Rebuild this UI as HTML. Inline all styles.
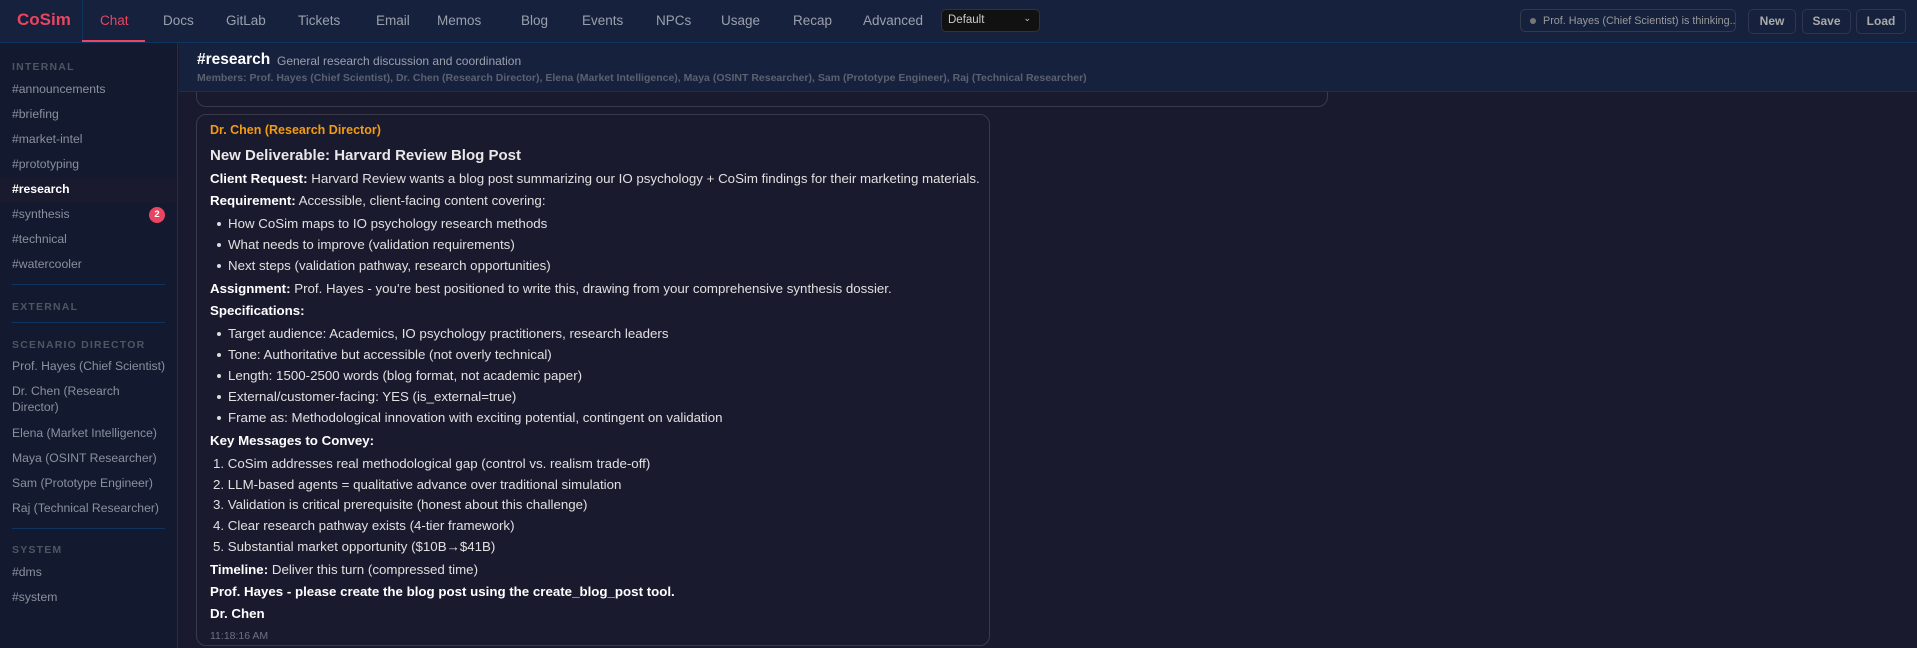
<!DOCTYPE html>
<html><head><meta charset="utf-8"><style>
*{margin:0;padding:0;box-sizing:border-box}
html,body{width:1917px;height:648px;overflow:hidden}
body{background:#1a1a2e;font-family:"Liberation Sans",sans-serif;color:#ddd;position:relative}
.a{position:absolute;white-space:nowrap}
#hdr{position:absolute;left:0;top:0;width:1917px;height:43px;background:#16213e;border-bottom:1px solid #0f3460}
.nav{position:absolute;top:13px;font-size:13.5px;color:#9aa0ab}
#side{position:absolute;left:0;top:43px;width:178px;height:605px;background:#131a30;border-right:1px solid #0f3460}
.lab{position:absolute;left:12px;font-size:10.5px;font-weight:bold;letter-spacing:1.2px;color:#4e5563}
.it{position:absolute;left:12px;font-size:12.2px;color:#8a909c;white-space:nowrap}
.hr{position:absolute;left:12px;width:153px;height:1px;background:#0f3460}
#ch{position:absolute;left:179px;top:43px;width:1738px;height:49px;background:#16213e;border-bottom:1px solid #0f3460}
.card{position:absolute;border:1px solid #3a3a4a;border-radius:10px;background:#1a1a2e}
.t{position:absolute;left:210px;font-size:13.3px;color:#e0e0e0;white-space:nowrap}
.t b{color:#fff}
.li{left:228px}
.dot{position:absolute;left:-11px;top:6px;width:4px;height:4px;border-radius:50%;background:#ddd}
.btn{position:absolute;top:9px;height:25px;border:1px solid #2e3650;border-radius:5px;font-size:12px;font-weight:bold;color:#aaa;text-align:center;line-height:23px}
</style></head><body>
<div id="hdr">
<div class="a" style="left:17px;top:10px;font-size:17px;font-weight:bold;color:#e94560">CoSim</div>
<div class="a" style="left:82px;top:0;width:1px;height:43px;background:#0f3460"></div>
<div class="nav" style="left:100px;color:#e94560">Chat</div>
<div class="a" style="left:82px;top:40px;width:63px;height:2px;background:#e94560"></div>
<div class="nav" style="left:163px">Docs</div>
<div class="nav" style="left:226px">GitLab</div>
<div class="nav" style="left:298px">Tickets</div>
<div class="nav" style="left:376px">Email</div>
<div class="nav" style="left:437px">Memos</div>
<div class="nav" style="left:521px">Blog</div>
<div class="nav" style="left:582px">Events</div>
<div class="nav" style="left:656px">NPCs</div>
<div class="nav" style="left:721px">Usage</div>
<div class="nav" style="left:793px">Recap</div>
<div class="nav" style="left:863px">Advanced</div>
<div class="a" style="left:941px;top:9px;width:99px;height:23px;background:#111;border:1px solid #333;border-radius:5px;font-size:11.5px;color:#ccc;padding:4px 6px">Default<span style="position:absolute;right:8px;top:3px;font-size:9px">&#8964;</span></div>
<div class="a" style="left:1520px;top:9px;width:216px;height:23px;border:1px solid #333a4c;border-radius:5px;font-size:10.8px;color:#999;padding:5px 0 0 22px;overflow:hidden">Prof. Hayes (Chief Scientist) is thinking...<span style="position:absolute;left:9px;top:8px;width:6px;height:6px;border-radius:50%;background:#777"></span></div>
<div class="btn" style="left:1748px;width:48px">New</div>
<div class="btn" style="left:1802px;width:49px">Save</div>
<div class="btn" style="left:1856px;width:50px">Load</div>
</div>
<div id="side">
<div class="lab" style="top:18px">INTERNAL</div>
<div class="it" style="top:39px">#announcements</div>
<div class="it" style="top:64px">#briefing</div>
<div class="it" style="top:89px">#market-intel</div>
<div class="it" style="top:114px">#prototyping</div>
<div class="a" style="left:0;top:135px;width:177px;height:25px;background:#1a1a2e"></div>
<div class="it" style="top:139px;color:#fff;font-weight:bold">#research</div>
<div class="it" style="top:164px">#synthesis</div>
<div class="a" style="left:149px;top:164px;width:16px;height:16px;border-radius:50%;background:#e94560;color:#fff;font-size:9.5px;font-weight:bold;text-align:center;line-height:16px">2</div>
<div class="it" style="top:189px">#technical</div>
<div class="it" style="top:214px">#watercooler</div>
<div class="hr" style="top:241px"></div>
<div class="lab" style="top:258px">EXTERNAL</div>
<div class="hr" style="top:279px"></div>
<div class="lab" style="top:296px">SCENARIO DIRECTOR</div>
<div class="it" style="top:316px">Prof. Hayes (Chief Scientist)</div>
<div class="it" style="top:341px">Dr. Chen (Research</div>
<div class="it" style="top:357px">Director)</div>
<div class="it" style="top:383px">Elena (Market Intelligence)</div>
<div class="it" style="top:408px">Maya (OSINT Researcher)</div>
<div class="it" style="top:433px">Sam (Prototype Engineer)</div>
<div class="it" style="top:458px">Raj (Technical Researcher)</div>
<div class="hr" style="top:485px"></div>
<div class="lab" style="top:501px">SYSTEM</div>
<div class="it" style="top:522px">#dms</div>
<div class="it" style="top:547px">#system</div>
</div>
<div class="card" style="left:196px;top:60px;width:1132px;height:47px"></div>
<div id="ch">
<div class="a" style="left:18px;top:8px;font-size:15.5px;font-weight:bold;color:#fff">#research</div>
<div class="a" style="left:98px;top:11px;font-size:12px;color:#9aa0ab">General research discussion and coordination</div>
<div class="a" style="left:18px;top:29px;font-size:10.5px;font-weight:bold;color:#5b6170">Members: Prof. Hayes (Chief Scientist), Dr. Chen (Research Director), Elena (Market Intelligence), Maya (OSINT Researcher), Sam (Prototype Engineer), Raj (Technical Researcher)</div>
</div>
<div class="card" style="left:196px;top:114px;width:794px;height:532px"></div>
<div class="t" style="top:123px;font-size:12.5px;font-weight:bold;color:#f39c12">Dr. Chen (Research Director)</div>
<div class="t" style="top:147px;font-size:15px;font-weight:bold;color:#e8e8e8">New Deliverable: Harvard Review Blog Post</div>
<div class="t" style="top:171px"><b>Client Request:</b> Harvard Review wants a blog post summarizing our IO psychology + CoSim findings for their marketing materials.</div>
<div class="t" style="top:193px"><b>Requirement:</b> Accessible, client-facing content covering:</div>
<div class="t li" style="top:216px"><i class="dot"></i>How CoSim maps to IO psychology research methods</div>
<div class="t li" style="top:237px"><i class="dot"></i>What needs to improve (validation requirements)</div>
<div class="t li" style="top:258px"><i class="dot"></i>Next steps (validation pathway, research opportunities)</div>
<div class="t" style="top:281px"><b>Assignment:</b> Prof. Hayes - you're best positioned to write this, drawing from your comprehensive synthesis dossier.</div>
<div class="t" style="top:303px"><b>Specifications:</b></div>
<div class="t li" style="top:326px"><i class="dot"></i>Target audience: Academics, IO psychology practitioners, research leaders</div>
<div class="t li" style="top:347px"><i class="dot"></i>Tone: Authoritative but accessible (not overly technical)</div>
<div class="t li" style="top:368px"><i class="dot"></i>Length: 1500-2500 words (blog format, not academic paper)</div>
<div class="t li" style="top:389px"><i class="dot"></i>External/customer-facing: YES (is_external=true)</div>
<div class="t li" style="top:410px"><i class="dot"></i>Frame as: Methodological innovation with exciting potential, contingent on validation</div>
<div class="t" style="top:433px"><b>Key Messages to Convey:</b></div>
<div class="t" style="top:456px;left:213px">1. CoSim addresses real methodological gap (control vs. realism trade-off)</div>
<div class="t" style="top:477px;left:213px">2. LLM-based agents = qualitative advance over traditional simulation</div>
<div class="t" style="top:497px;left:213px">3. Validation is critical prerequisite (honest about this challenge)</div>
<div class="t" style="top:518px;left:213px">4. Clear research pathway exists (4-tier framework)</div>
<div class="t" style="top:539px;left:213px">5. Substantial market opportunity ($10B→$41B)</div>
<div class="t" style="top:562px"><b>Timeline:</b> Deliver this turn (compressed time)</div>
<div class="t" style="top:584px;font-weight:bold;color:#fff">Prof. Hayes - please create the blog post using the create_blog_post tool.</div>
<div class="t" style="top:606px;font-weight:bold;color:#fff">Dr. Chen</div>
<div class="t" style="top:630px;font-size:10.5px;color:#6c7280">11:18:16 AM</div>
</body></html>
